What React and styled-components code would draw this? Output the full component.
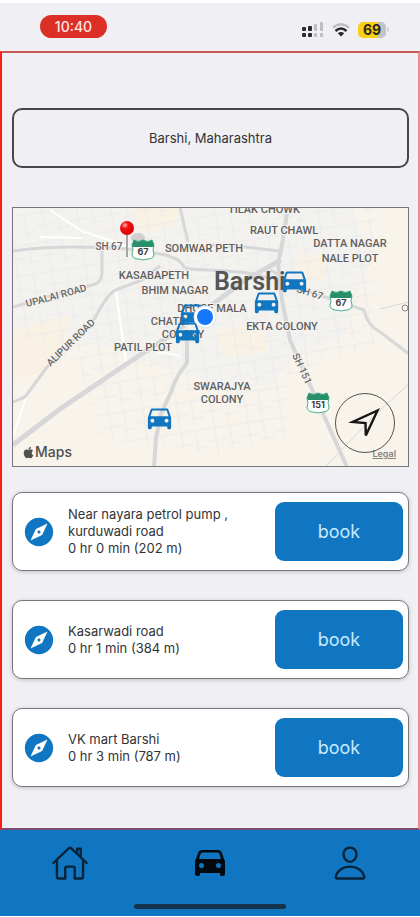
import React from "react";
import styled, { createGlobalStyle } from "styled-components";
import { IoHomeOutline, IoPersonOutline } from "react-icons/io5";
import { MdDirectionsCar, MdExplore } from "react-icons/md";
import { FaApple } from "react-icons/fa";

const blue = "#1176c2";

const GlobalStyle = createGlobalStyle`
  * { box-sizing: border-box; }
  body { margin: 0; background: #fff; font-family: Inter, "Liberation Sans", sans-serif; color: #333336; }
  button, input { font: inherit; color: inherit; }
`;

const Page = styled.div`
  min-height: 100vh;
  display: flex;
  flex-direction: column;
  padding: 3px 0 1px;
`;

const StatusBar = styled.header`
  height: 48px;
  padding: 0 31px 2px 40px;
  display: flex;
  align-items: center;
  justify-content: space-between;
  background: #f0eff3;
`;

const TimePill = styled.time`
  width: 67px;
  height: 23px;
  border-radius: 12px;
  background: #dc2f27;
  color: #ffe6e4;
  font-size: 14px;
  font-weight: 500;
  line-height: 23px;
  text-align: center;
`;

const StatusIcons = styled.div`
  display: flex;
  align-items: center;
  gap: 8px;
  padding-top: 7px;
`;

const BatteryGroup = styled.span`
  display: flex;
  align-items: center;
  gap: 1px;
`;

const Battery = styled.span`
  width: 28px;
  height: 16px;
  border-radius: 5px;
  background: linear-gradient(90deg, #f8cf17 72%, #c3c2c4 72%);
  color: #2d2913;
  font-size: 14px;
  font-weight: 700;
  line-height: 16px;
  text-align: center;
`;

const BatteryNub = styled.span`
  width: 2px;
  height: 5px;
  border-radius: 0 2px 2px 0;
  background: #d2d1d4;
`;

const Screen = styled.main`
  flex: 1;
  display: flex;
  flex-direction: column;
  padding: 55px 9px 40px 10px;
  background: #f0eff3;
  border: 2px solid #ff1d17;
  border-top-color: #cc5557;
  border-right-color: #f08a8d;
  border-bottom-color: #7d4b70;
`;

const PlaceInput = styled.input`
  width: 100%;
  height: 60px;
  border: 2px solid #47474b;
  border-radius: 10px;
  background: transparent;
  font-size: 13px;
  text-align: center;
`;

const MapPanel = styled.section`
  position: relative;
  height: 260px;
  margin: 39px 0 25px;
  border: 1px solid #77777a;
  background: #f6f2eb;
`;

const MapSvg = styled.svg`
  display: block;
  width: 100%;
  height: 100%;
`;

const AreaLabel = styled.text`
  font-family: Roboto, sans-serif;
  font-size: 11px;
  font-weight: 500;
  fill: #5f5f60;
  text-anchor: middle;
  stroke: #f6f3ee;
  stroke-width: 2px;
  paint-order: stroke;
`;

const RoadLabel = styled.text`
  font-family: Roboto, sans-serif;
  font-size: 10px;
  font-weight: 500;
  fill: #656567;
  text-anchor: middle;
  stroke: #f6f3ee;
  stroke-width: 2px;
  paint-order: stroke;
`;

const CityLabel = styled.text`
  font-family: Roboto, sans-serif;
  font-size: 25px;
  font-weight: 600;
  fill: #555556;
`;

const ShieldLabel = styled.text`
  font-family: Inter, sans-serif;
  font-size: 9px;
  font-weight: 700;
  fill: #3c3c3e;
  text-anchor: middle;
`;

const MapBrand = styled.span`
  position: absolute;
  left: 9px;
  bottom: 5px;
  display: flex;
  align-items: center;
  font-size: 14px;
  font-weight: 500;
  line-height: 18px;
  color: #505050;
`;

const LegalLink = styled.a`
  position: absolute;
  right: 12px;
  bottom: 7px;
  font-size: 9px;
  font-weight: 600;
  color: #858482;
`;

const LocateButton = styled.button`
  position: absolute;
  right: 13px;
  bottom: 13px;
  width: 60px;
  height: 60px;
  padding: 0;
  display: grid;
  place-items: center;
  border: 1px solid #55534f;
  border-radius: 50%;
  background: transparent;
  color: #151515;
`;

const StationList = styled.ul`
  display: grid;
  gap: 29px;
  margin: 0;
  padding: 0;
  list-style: none;
`;

const StationCard = styled.li`
  min-height: 79px;
  padding: 5px 5px 5px 9px;
  display: flex;
  align-items: center;
  border: 1px solid #77777a;
  border-radius: 10px;
  background: #fff;
  box-shadow: 0 1px 4px rgba(0, 0, 0, 0.2);
`;

const StationText = styled.div`
  flex: 1;
  padding: 0 12px;
  font-size: 13px;
  line-height: 17px;
`;

const Line = styled.p`
  margin: 0;
`;

const BookButton = styled.button`
  width: 128px;
  height: 59px;
  border: 0;
  border-radius: 9px;
  background: ${blue};
  color: #c5ebff;
  font-size: 18px;
`;

const TabBar = styled.nav`
  height: 86px;
  padding: 14px 0 7px;
  display: flex;
  flex-direction: column;
  align-items: center;
  justify-content: space-between;
  background: ${blue};
`;

const Tabs = styled.div`
  width: 100%;
  display: grid;
  grid-template-columns: repeat(3, 1fr);
`;

const Tab = styled.a`
  display: grid;
  place-items: center;
  height: 38px;
  color: ${(p) => (p.$active ? "#020a10" : "#062338")};
`;

const HomeIndicator = styled.div`
  width: 36%;
  height: 5px;
  border-radius: 3px;
  background: #123349;
`;

const roads = [
  { w: 3, d: "M13 251C45 246 85 246 128 249C150 253 178 253 184 267C190 272 218 268 253 274L268 278" },
  { w: 3, d: "M102 248V272Q102 283 92 285L50 296L13 307" },
  { w: 3, d: "M13 402L25 397L47 367L95 318Q108 292 118 289L142 280L160 266" },
  { w: 5, d: "M13 445L60 409L137 357L168 337L208 308L245 280L281 260" },
  { w: 4, d: "M187 335V363Q176 376 171 392L161 414L156 438L154 467" },
  { w: 4, d: "M288 207L282 245L278 263L282 300L290 340L310 385L325 418L347 467" },
  { w: 3, d: "M180 207L188 242M210 245L245 247L279 251" },
  { w: 3, d: "M270 270L310 292L340 302L364 310Q367 325 380 332L409 354" },
  { w: 1, d: "M409 384L380 410L325 467M380 309L409 302" },
];

const areaLabels = [
  ["TILAK CHOWK", 264, 213],
  ["RAUT CHAWL", 284, 234],
  ["DATTA NAGAR", 350, 247],
  ["NALE PLOT", 350, 262],
  ["SOMWAR PETH", 204, 252],
  ["KASABAPETH", 154, 279],
  ["BHIM NAGAR", 175, 294],
  ["DHOGE MALA", 212, 312],
  ["EKTA COLONY", 282, 330],
  ["CHATRI", 170, 325],
  ["COLONY", 183, 338],
  ["PATIL PLOT", 143, 351],
  ["SWARAJYA", 222, 390],
  ["COLONY", 222, 403],
];

const cars = [
  [294, 281],
  [266, 302],
  [192, 314],
  [187, 332],
  [159, 418],
];

const shields = [
  ["67", 143, 250],
  ["67", 341, 301],
  ["151", 318, 403],
];

const stations = [
  { lines: ["Near nayara petrol pump ,", "kurduwadi road"], trip: "0 hr 0 min (202 m)" },
  { lines: ["Kasarwadi road"], trip: "0 hr 1 min (384 m)" },
  { lines: ["VK mart Barshi"], trip: "0 hr 3 min (787 m)" },
];

function SignalIcon() {
  return (
    <svg width="22" height="15" viewBox="0 0 22 15" aria-label="Signal">
      <g fill="#2b2b2d">
        <rect x="0" y="5" width="4" height="4" rx="1" />
        <rect x="6" y="4" width="4" height="5" rx="1" />
        <rect x="0" y="11" width="4" height="4" rx="1" />
        <rect x="6" y="11" width="4" height="4" rx="1" />
      </g>
      <g fill="#bdbcc0">
        <rect x="12" y="2" width="3" height="7" rx="1" />
        <rect x="18" y="0" width="3" height="9" rx="1" />
        <rect x="12" y="11" width="3" height="4" rx="1" />
        <rect x="18" y="11" width="3" height="4" rx="1" />
      </g>
    </svg>
  );
}

function WifiIcon() {
  return (
    <svg width="18" height="14" viewBox="0 0 18 14" fill="none" aria-label="Wi-Fi">
      <path d="M1 4.5Q9-2 17 4.5" stroke="#bdbcc0" strokeWidth="2.4" />
      <path d="M3.5 8Q9 3 14.5 8" stroke="#29292b" strokeWidth="2.6" />
      <path d="M5.8 10.3Q9 7.5 12.2 10.3L9 13.5Z" fill="#29292b" />
    </svg>
  );
}

function ArrowIcon() {
  return (
    <svg width="34" height="34" viewBox="0 0 34 34" fill="none" stroke="currentColor" strokeWidth="2.4" aria-hidden="true">
      <path d="M29.500 4.500L4.500 16L17.500 17L17.800 29.500Z" strokeLinejoin="miter" />
    </svg>
  );
}

function CarIcon() {
  return (
    <svg width="32" height="28" viewBox="0 0 32 28" aria-hidden="true">
      <path
        fill="currentColor"
        fillRule="evenodd"
        d="M8 1H24Q27 1 28 4L30 10Q31 11 31 13V25Q31 27 29 27H27Q26 27 26 25V24H6V25Q6 27 5 27H3Q1 27 1 25V13Q1 11 2 10L4 4Q5 1 8 1ZM8.500 3.500Q7 3.500 6.500 5L5 10H27L25.500 5Q25 3.500 23.500 3.500ZM7.500 14A2.500 2.500 0 1 0 7.500 19A2.500 2.500 0 1 0 7.500 14ZM24.500 14A2.500 2.500 0 1 0 24.500 19A2.500 2.500 0 1 0 24.500 14Z"
      />
    </svg>
  );
}

function Shield({ label, x, y }) {
  return (
    <g transform={`translate(${x} ${y})`}>
      <path
        d="M-9-10Q-5-7 0-10Q5-7 9-10L11-5Q9 0 11 4Q11 8 6 9Q3 9 0 10Q-3 9-6 9Q-11 8-11 4Q-9 0-11-5Z"
        fill="#fff"
        stroke="#46ad8b"
        strokeWidth="1"
      />
      <path d="M-9-10Q-5-7 0-10Q5-7 9-10L11-5L10-3H-10L-11-5Z" fill="#27906b" />
      <ShieldLabel y="5">{label}</ShieldLabel>
    </g>
  );
}

function MapDrawing() {
  return (
    <MapSvg viewBox="13 208 395 258" preserveAspectRatio="xMidYMid slice" role="img" aria-label="Map of Barshi">
      <defs>
        <pattern id="streets" width="34" height="30" patternUnits="userSpaceOnUse" patternTransform="rotate(-9)">
          <path d="M0 6H34M0 19H20M9 0V30M24 6V30M20 24H34" stroke="#e9ebec" strokeWidth="1" fill="none" />
        </pattern>
        <radialGradient id="pin" cx="0.35" cy="0.3" r="0.7">
          <stop offset="0" stopColor="#ffb3ae" />
          <stop offset="0.35" stopColor="#f51414" />
          <stop offset="1" stopColor="#dc0000" />
        </radialGradient>
      </defs>
      <rect x="13" y="208" width="395" height="258" fill="#f8f3eb" />
      <path d="M13 208H350L372 250L345 335L290 360L270 385L225 390L190 375L95 345L13 330Z" fill="#f3f2ef" />
      <path d="M130 208H180L175 225L142 234ZM13 330L70 315L60 365L13 380ZM300 250L330 262L322 282L296 276ZM215 330L262 322L268 350L225 358Z" fill="#f8f1e4" />
      <path d="M13 208H375V345L290 375L285 440L225 455L100 440L80 365L13 330Z" fill="url(#streets)" />
      <path d="M50 210L82 231L130 247M116 290L122 335L126 362M150 350L180 356M13 436L28 392M40 237L82 238" stroke="#fff" strokeWidth="2" fill="none" />
      {roads.map((road) => (
        <path key={road.d} d={road.d} stroke="#d7d7d9" strokeWidth={road.w} fill="none" strokeLinejoin="round" />
      ))}
      {areaLabels.map(([label, x, y]) => (
        <AreaLabel key={`${label}${y}`} x={x} y={y}>{label}</AreaLabel>
      ))}
      <RoadLabel x="109" y="250">SH 67</RoadLabel>
      <RoadLabel transform="translate(57 299) rotate(-15)">UPALAI ROAD</RoadLabel>
      <RoadLabel transform="translate(73 345) rotate(-44)">ALIPUR ROAD</RoadLabel>
      <RoadLabel transform="translate(309 296) rotate(17)">SH 67</RoadLabel>
      <RoadLabel transform="translate(299 370) rotate(65)">SH 151</RoadLabel>
      <circle cx="405" cy="308" r="3" fill="none" stroke="#858585" />
      <CityLabel x="214" y="290">Barshi</CityLabel>
      <ellipse cx="138" cy="238" rx="7" ry="5" fill="#6a6a6a" opacity="0.25" />
      {shields.map(([label, x, y]) => (
        <Shield key={`${label}${x}`} label={label} x={x} y={y} />
      ))}
      <path d="M127 233V257" stroke="#a6a6a4" strokeWidth="2" />
      <circle cx="127" cy="228" r="7" fill="url(#pin)" />
      {cars.map(([x, y]) => (
        <MdDirectionsCar key={`${x}${y}`} x={x - 15} y={y - 16} size="31" color={blue} />
      ))}
      <circle cx="205" cy="317" r="11" fill="#fff" stroke="#dfe6ee" />
      <circle cx="205" cy="317" r="8" fill="#1577fa" />
    </MapSvg>
  );
}

export default function App() {
  return (
    <Page>
      <GlobalStyle />
      <StatusBar>
        <TimePill>10:40</TimePill>
        <StatusIcons>
          <SignalIcon />
          <WifiIcon />
          <BatteryGroup>
            <Battery>69</Battery>
            <BatteryNub />
          </BatteryGroup>
        </StatusIcons>
      </StatusBar>
      <Screen>
        <PlaceInput type="text" aria-label="Location" defaultValue="Barshi, Maharashtra" />
        <MapPanel>
          <MapDrawing />
          <MapBrand><FaApple size="13" />Maps</MapBrand>
          <LegalLink href="#legal">Legal</LegalLink>
          <LocateButton type="button" aria-label="Show my location">
            <ArrowIcon />
          </LocateButton>
        </MapPanel>
        <StationList>
          {stations.map((station) => (
            <StationCard key={station.trip}>
              <MdExplore size="34" color={blue} />
              <StationText>
                {station.lines.map((line) => <Line key={line}>{line}</Line>)}
                <Line>{station.trip}</Line>
              </StationText>
              <BookButton type="button">book</BookButton>
            </StationCard>
          ))}
        </StationList>
      </Screen>
      <TabBar>
        <Tabs>
          <Tab href="#home" aria-label="Home"><IoHomeOutline size="38" /></Tab>
          <Tab href="#parking" aria-label="Parking" $active><CarIcon /></Tab>
          <Tab href="#profile" aria-label="Profile"><IoPersonOutline size="38" /></Tab>
        </Tabs>
        <HomeIndicator />
      </TabBar>
    </Page>
  );
}
